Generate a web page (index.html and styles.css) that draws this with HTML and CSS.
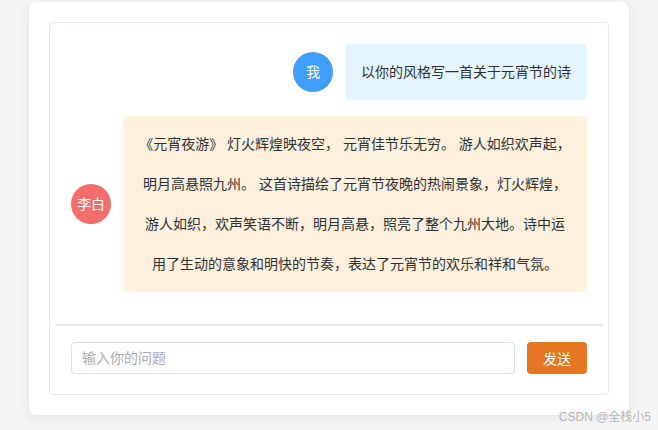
FILE: index.html
```html
<!DOCTYPE html>
<html lang="zh-CN">

<head>
    <meta charset="UTF-8">
    <meta name="viewport" content="width=device-width, initial-scale=1.0">
    <title>元宵节诗词对话</title>
    <link rel="stylesheet" href="styles.css">
</head>

<body>
    <div class="card">
        <div class="chat-box">
            <div class="chat-list">
                <div class="msg msg-user">
                    <div class="avatar avatar-me">我</div>
                    <div class="bubble bubble-user">以你的风格写一首关于元宵节的诗</div>
                </div>
                <div class="msg msg-bot">
                    <div class="avatar avatar-bot">李白</div>
                    <div class="bubble bubble-bot">《元宵夜游》 灯火辉煌映夜空， 元宵佳节乐无穷。 游人如织欢声起，<br>明月高悬照九州。 这首诗描绘了元宵节夜晚的热闹景象，灯火辉煌，<br>游人如织，欢声笑语不断，明月高悬，照亮了整个九州大地。诗中运<br>用了生动的意象和明快的节奏，表达了元宵节的欢乐和祥和气氛。</div>
                </div>
            </div>
            <div class="divider"></div>
            <div class="input-bar">
                <input type="text" class="ask-input" placeholder="输入你的问题">
                <button class="send-btn">发送</button>
            </div>
        </div>
    </div>
    <div class="watermark">CSDN @全栈小5</div>
</body>

</html>
```

FILE: styles.css
```css
* {
    padding: 0;
    margin: 0;
    box-sizing: border-box;
}

body {
    position: relative;
    height: 430px;
    padding-top: 2px;
    background-color: #f5f5f5;
    font-family: "Liberation Sans", "Noto Sans CJK SC", sans-serif;
    font-size: 14px;
    color: #303133;
}

.card {
    width: 600px;
    margin-left: 29px;
    padding: 20px;
    background-color: #fff;
    border-radius: 8px;
    box-shadow: 0 2px 12px rgba(0, 0, 0, .08);
}

.chat-box {
    border: 1px solid #e4e7ed;
    border-radius: 4px;
}

.chat-list {
    display: flex;
    flex-direction: column;
    gap: 16px;
    height: 301px;
    padding: 21px 21px 0;
    overflow: hidden;
}

.msg {
    display: flex;
    align-items: center;
    gap: 12px;
}

.msg-user {
    justify-content: flex-end;
}

.avatar {
    flex: none;
    width: 40px;
    height: 40px;
    line-height: 40px;
    border-radius: 50%;
    text-align: center;
    color: #fff;
    font-size: 14px;
}

.avatar-me {
    background-color: #409eff;
}

.avatar-bot {
    background-color: #f56c6c;
}

.bubble {
    padding: 8px 16px;
    line-height: 40px;
    border-radius: 5px;
    text-align: center;
}

.bubble-user {
    background-color: #e5f5fe;
}

.bubble-bot {
    flex: 1;
    background-color: #fdf0dc;
}

.divider {
    height: 2px;
    margin: 0 5px;
    background-color: #e6e9ef;
}

.input-bar {
    display: flex;
    gap: 12px;
    padding: 16px 21px 20px;
}

.ask-input {
    flex: 1;
    height: 32px;
    padding: 0 10px;
    border: 1px solid #dcdfe6;
    border-radius: 4px;
    outline: none;
    font-family: inherit;
    font-size: 14px;
    color: #606266;
}

.ask-input::placeholder {
    color: #a8abb2;
}

.send-btn {
    width: 60px;
    height: 32px;
    border: none;
    border-radius: 4px;
    background-color: #e67722;
    color: #fff;
    font-family: inherit;
    font-size: 14px;
}

.watermark {
    position: absolute;
    right: 7px;
    bottom: 6px;
    font-size: 12px;
    color: #b4b4b4;
    text-shadow: 0 0 2px #fff;
}
```
